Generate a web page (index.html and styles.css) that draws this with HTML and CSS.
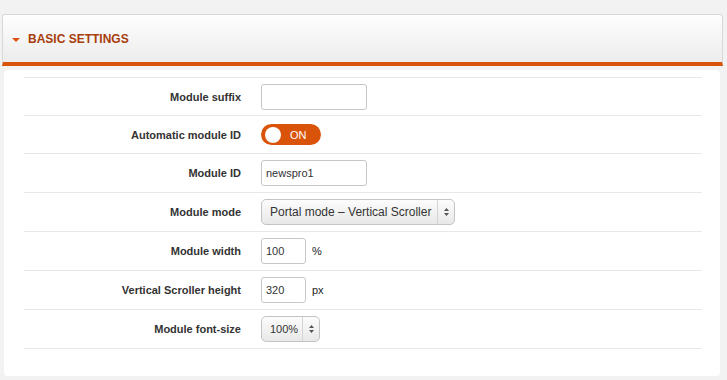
FILE: index.html
```html
<!DOCTYPE html>
<html lang="en">
<head>
  <meta charset="UTF-8">
  <title>Basic Settings</title>
  <link rel="stylesheet" href="styles.css">
</head>
<body>
  <div class="panel-head">
    <span class="caret"></span>
    <h3>BASIC SETTINGS</h3>
  </div>

  <div class="panel-body">
    <div class="row first">
      <label>Module suffix</label>
      <input type="text" class="field wide" value="">
    </div>
    <div class="row first">
      <label>Automatic module ID</label>
      <div class="toggle">
        <span class="knob"></span>
        <span class="toggle-text">ON</span>
      </div>
    </div>
    <div class="row">
      <label>Module ID</label>
      <input type="text" class="field wide" value="newspro1">
    </div>
    <div class="row">
      <label>Module mode</label>
      <div class="select mode">
        <span class="select-text">Portal mode – Vertical Scroller</span>
        <span class="select-arrows">
          <svg width="7" height="10" viewBox="0 0 7 10"><path d="M3.5 1 L6 4 H1 Z M3.5 9 L6 6 H1 Z" fill="#555"/></svg>
        </span>
      </div>
    </div>
    <div class="row">
      <label>Module width</label>
      <input type="text" class="field small" value="100">
      <span class="unit">%</span>
    </div>
    <div class="row">
      <label>Vertical Scroller height</label>
      <input type="text" class="field small" value="320">
      <span class="unit">px</span>
    </div>
    <div class="row last">
      <label>Module font-size</label>
      <div class="select size">
        <span class="select-text">100%</span>
        <span class="select-arrows">
          <svg width="7" height="10" viewBox="0 0 7 10"><path d="M3.5 1 L6 4 H1 Z M3.5 9 L6 6 H1 Z" fill="#555"/></svg>
        </span>
      </div>
    </div>
  </div>
</body>
</html>
```

FILE: styles.css
```css
body {
  margin: 0;
  padding: 14px 4px 5px 2px;
  background: #f2f2f2;
  font-family: "Liberation Sans", Arial, sans-serif;
  color: #333;
}
.panel-head {
  display: flex;
  align-items: center;
  height: 47px;
  padding-left: 9px;
  border: 1px solid #d8d8d8;
  border-bottom: 4px solid #d9540a;
  border-radius: 3px 3px 0 0;
  background: linear-gradient(#fefefe, #ececec);
}
.caret {
  width: 0;
  height: 0;
  border-left: 4px solid transparent;
  border-right: 4px solid transparent;
  border-top: 4px solid #d9540a;
  margin-right: 8px;
  margin-top: 2px;
}
h3 {
  margin: 0;
  font-size: 12px;
  font-weight: bold;
  color: #a83d0c;
}
.panel-body {
  margin: 4px 3px 0 2px;
  padding: 7px 18px 27px 20px;
  background: #fff;
  border-radius: 4px;
}
.row {
  display: flex;
  align-items: center;
  height: 38px;
  border-top: 1px solid #e8e8e8;
}
.row.first {
  height: 37px;
}
.row.last {
  border-bottom: 1px solid #e8e8e8;
}
label {
  width: 217px;
  margin-right: 20px;
  text-align: right;
  font-size: 11px;
  font-weight: bold;
  color: #333;
}
.field {
  box-sizing: border-box;
  height: 26px;
  margin: 0;
  padding: 0 4px;
  border: 1px solid #c6c6c6;
  border-radius: 3px;
  font-family: "Liberation Sans", Arial, sans-serif;
  font-size: 11px;
  color: #333;
  outline: none;
}
.wide {
  width: 106px;
}
.small {
  width: 45px;
}
.unit {
  margin-left: 6px;
  font-size: 11px;
  color: #222;
}
.toggle {
  display: flex;
  align-items: center;
  width: 60px;
  height: 21px;
  border-radius: 11px;
  background: #d9540a;
}
.knob {
  width: 16px;
  height: 16px;
  margin-left: 4px;
  border-radius: 50%;
  background: radial-gradient(circle at 50% 35%, #fff 50%, #e6e6e6);
}
.toggle-text {
  margin-left: 9px;
  font-size: 11px;
  color: #fff;
}
.select {
  box-sizing: border-box;
  display: flex;
  align-items: center;
  height: 26px;
  border: 1px solid #c4c4c4;
  border-radius: 5px;
  background: linear-gradient(#fcfcfc, #e8e8e8);
  font-size: 11px;
  color: #333;
}
.select.mode {
  width: 194px;
  font-size: 12px;
}
.select.size {
  width: 59px;
}
.select-text {
  flex: 1;
  padding-left: 8px;
  white-space: nowrap;
  overflow: hidden;
}
.select-arrows {
  display: flex;
  align-items: center;
  justify-content: center;
  width: 16px;
  height: 24px;
  border-left: 1px solid #d4d4d4;
}
```
